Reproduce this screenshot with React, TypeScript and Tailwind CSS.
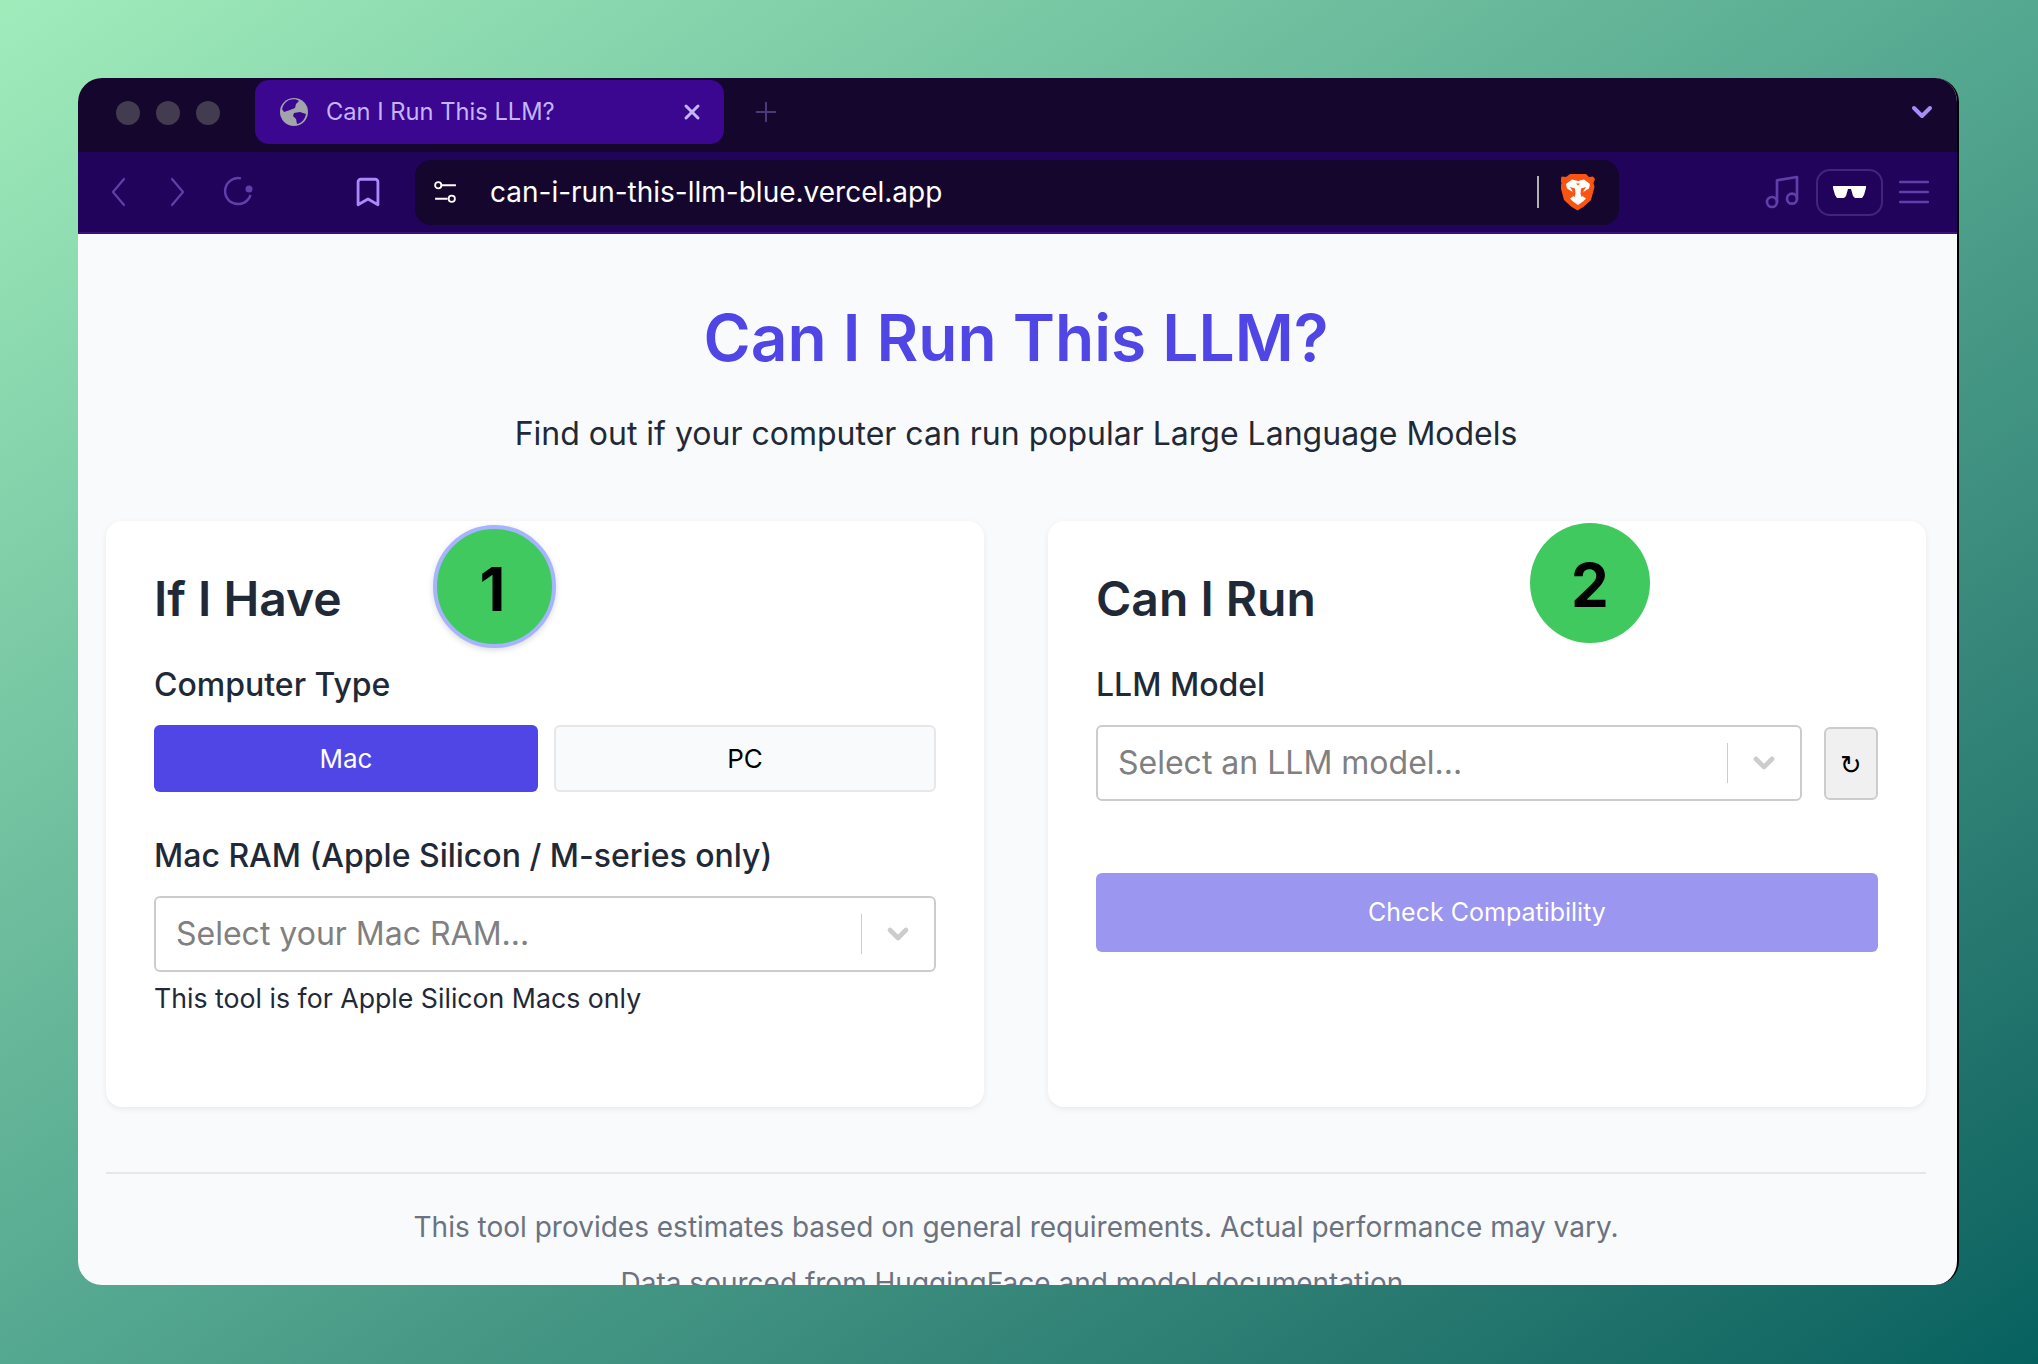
import { ChevronDown, Music, Plus, Bookmark, X } from "lucide-react";

function BraveLogo() {
  return (
    <svg width="34" height="38" viewBox="0 0 34 38">
      <path fill="#fb5412" d="M9 1h16l3 3 4-0.500 2 2.500-1.500 4 1 4-3.500 13-7 6.500-6.500 4-6.500-4-7-6.500-3.500-13 1-4-1.500-4 2-2.500 4 0.500z" />
      <path fill="#fff" d="M5 11l6-4.500 6 1.500 6-1.500 6 4.500-1 4.500-5 3-1 5 3 2-3 3-5 3.500-5-3.500-3-3 3-2-1-5-5-3z" />
      <path fill="#fb5412" d="M9 14l5 1.500 .5 5-1 3.500-3-2 1-4zM25 14l-5 1.500-.5 5 1 3.500 3-2-1-4zM15 10.500h4l-2 2z" />
    </svg>
  );
}

function Glasses() {
  return (
    <svg width="33" height="12" viewBox="0 0 33 12">
      <path fill="#fff" d="M0 0h33v2l-2 7-2 3h-7l-2-2-2-7h-3l-2 7-2 2h-7l-2-3-2-7z" />
    </svg>
  );
}

function Globe() {
  return (
    <svg width="28" height="28" viewBox="0 0 28 28">
      <circle cx="14" cy="14" r="14" fill="#a3a3ab" />
      <path fill="#3b0690" d="M9 2c4-1 8-1 10 1l-3 3-1 4-5 2-6 2-2-3c1-4 3-7 7-9zM14 15l6-1 6 2c-1 5-4 9-9 10l-1-5-3-3z" />
    </svg>
  );
}

function NavChevron({ d, className }: { d: string; className?: string }) {
  return (
    <svg width="16" height="30" viewBox="0 0 16 30" fill="none" stroke="#5f3fa8" strokeWidth="2.200" strokeLinecap="round" strokeLinejoin="round" className={className}>
      <path d={d} />
    </svg>
  );
}

function SelectBox({ text }: { text: string }) {
  return (
    <div className="flex h-[76px] items-center rounded-[6px] border-2 border-[#cccccc] bg-white pl-[20px]">
      <span className="flex-1 text-[32px] text-[#808080]">{text}</span>
      <span className="h-[40px] w-[1px] bg-[#cccccc]" />
      <ChevronDown size={32} strokeWidth={3.5} className="mx-[20px] text-[#cccccc]" />
    </div>
  );
}

export default function App() {
  return (
    <div className="h-[1364px] w-[2038px] overflow-hidden bg-gradient-to-br from-[#a0ecbb] via-[#55a890] to-[#05615f] pl-[78px] pt-[78px] font-['Inter',sans-serif]">
      <div className="flex h-[1207px] w-[1881px] flex-col overflow-hidden rounded-[24px] border-r-2 border-black bg-[#f9fafb]">
        {/* tab strip */}
        <div className="flex h-[74px] shrink-0 items-start bg-[#15062d] pl-[38px] pr-[19px]">
          <div className="mt-[23px] flex gap-[16px]">
            <span className="h-[24px] w-[24px] rounded-full bg-[#433b4f]" />
            <span className="h-[24px] w-[24px] rounded-full bg-[#433b4f]" />
            <span className="h-[24px] w-[24px] rounded-full bg-[#433b4f]" />
          </div>
          <div className="ml-[35px] mt-[2px] flex h-[64px] w-[469px] items-center rounded-[14px] bg-[#3b0690] pl-[25px] pr-[20px]">
            <Globe />
            <span className="ml-[18px] flex-1 text-[23.7px] text-[#c4b5fd]">Can I Run This LLM?</span>
            <X size={24} strokeWidth={3} className="text-[#c4b5fd]" />
          </div>
          <Plus size={32} strokeWidth={1.5} className="ml-[26px] mt-[18px] text-[#4c3a78]" />
          <ChevronDown size={32} strokeWidth={3} className="ml-auto mt-[18px] text-[#a78bfa]" />
        </div>

        {/* toolbar */}
        <div className="flex h-[82px] shrink-0 items-center border-b-2 border-[#3a1478] bg-[#22035c] pl-[32px] pr-[28px]">
          <NavChevron d="M14 2 3 15l11 13" />
          <NavChevron d="M2 2l11 13L2 28" className="ml-[44px]" />
          <svg width="32" height="32" viewBox="0 0 32 32" className="ml-[36px] -mt-[2px]" fill="none" stroke="#5f3fa8" strokeWidth="2.500">
            <path d="M19 3.400A13 13 0 1 0 28.500 20" />
            <circle cx="27" cy="14" r="3.500" fill="#5f3fa8" stroke="none" />
          </svg>
          <Bookmark size={34} strokeWidth={2} className="ml-[97px] text-[#a78bfa]" />
          <div className="ml-[30px] flex h-[65px] w-[1204px] items-center rounded-[16px] bg-[#15062d] pl-[18px] pr-[24px]">
            <svg width="25" height="25" viewBox="0 0 24 24" fill="none" stroke="#fff" strokeWidth="1.800">
              <circle cx="5" cy="5" r="3" />
              <path d="M8 5h14M2 18h12" />
              <circle cx="18" cy="18" r="3" />
            </svg>
            <span className="ml-[32px] flex-1 text-[28px] text-white">can-i-run-this-llm-blue.vercel.app</span>
            <span className="h-[32px] w-[2px] bg-[#b3b0b8]" />
            <span className="ml-[22px] flex">
              <BraveLogo />
            </span>
          </div>
          <Music size={40} strokeWidth={1.6} className="ml-auto text-[#5f3fa8]" />
          <div className="ml-[14px] flex h-[47px] w-[67px] items-center justify-center rounded-[14px] border-2 border-[#44237f]">
            <Glasses />
          </div>
          <svg width="30" height="24" viewBox="0 0 30 24" stroke="#5f3fa8" strokeWidth="2.500" strokeLinecap="round" className="ml-[16px]">
            <path d="M1 2h28M1 12h28M1 22h28" />
          </svg>
        </div>

        {/* page */}
        <div className="pl-[28px] pr-[31px] text-center">
          <h1 className="mt-[70px] text-[64px] leading-[68px] font-semibold text-[#4f46e5]">Can I Run This LLM?</h1>
          <p className="mt-[43px] text-[32px] leading-[38px] text-[#1f2937]">
            Find out if your computer can run popular Large Language Models
          </p>

          <div className="mt-[68px] flex h-[586px] gap-[64px] text-left">
            <div className="relative flex-1 rounded-[16px] bg-white p-[48px] shadow-[0_2px_6px_rgba(0,0,0,0.07)]">
              <h2 className="mt-[2px] text-[48px] leading-[56px] font-semibold text-[#1f2937]">If I Have</h2>
              <p className="mt-[38px] text-[32px] leading-[40px] font-medium text-[#1f2937]">Computer Type</p>
              <div className="mt-[20px] flex gap-[16px]">
                <button className="h-[67px] w-[384px] rounded-[6px] bg-[#4f46e5] text-[26px] text-white">Mac</button>
                <button className="h-[67px] flex-1 rounded-[6px] border-2 border-[#e5e7eb] bg-[#f9fafb] text-[26px] text-black">PC</button>
              </div>
              <p className="mt-[44px] text-[32px] leading-[40px] font-medium text-[#1f2937]">Mac RAM (Apple Silicon / M-series only)</p>
              <div className="mt-[20px]">
                <SelectBox text="Select your Mac RAM..." />
              </div>
              <p className="mt-[9px] text-[26.7px] leading-[34px] text-[#1f2937]">This tool is for Apple Silicon Macs only</p>
              <div className="absolute left-[327px] top-[4px] flex h-[123px] w-[123px] items-center justify-center rounded-full border-4 border-[#a5b4fc] bg-[#40c95f] pr-[4px] pt-[5px] text-[60px] font-bold text-black shadow-[0_2px_6px_rgba(0,0,0,0.15)]">1</div>
            </div>

            <div className="relative flex-1 rounded-[16px] bg-white p-[48px] shadow-[0_2px_6px_rgba(0,0,0,0.07)]">
              <h2 className="mt-[2px] text-[48px] leading-[56px] font-semibold text-[#1f2937]">Can I Run</h2>
              <p className="mt-[38px] text-[32px] leading-[40px] font-medium text-[#1f2937]">LLM Model</p>
              <div className="mt-[20px] flex items-center gap-[22px]">
                <div className="flex-1">
                  <SelectBox text="Select an LLM model..." />
                </div>
                <button className="h-[73px] w-[54px] rounded-[6px] border-2 border-[#cccccc] bg-[#f0f0f0] pt-[5px] font-['DejaVu_Sans',sans-serif] text-[26px] text-black">↻</button>
              </div>
              <button className="mt-[72px] h-[79px] w-full rounded-[6px] bg-[#9b96f0] text-[25px] text-white">Check Compatibility</button>
              <div className="absolute left-[482px] top-[2px] flex h-[120px] w-[120px] items-center justify-center rounded-full bg-[#40c95f] pt-[3px] text-[60px] font-bold text-black">2</div>
            </div>
          </div>

          <div className="mt-[65px] border-t-2 border-[#e5e7eb] pt-[36px] text-[28px] leading-[34px] text-[#6b7280]">
            <p>This tool provides estimates based on general requirements. Actual performance may vary.</p>
            <p className="mt-[22px]">Data sourced from HuggingFace and model documentation.</p>
          </div>
        </div>
      </div>
    </div>
  );
}
